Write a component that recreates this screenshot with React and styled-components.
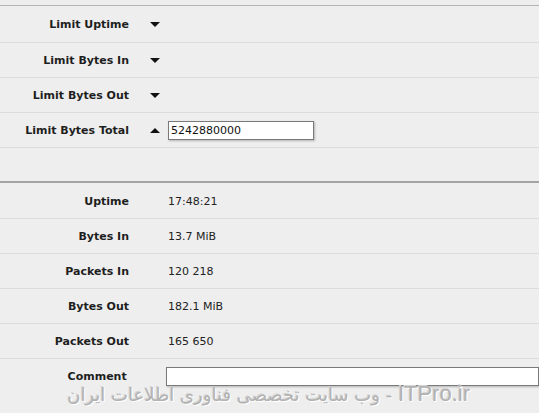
import React from 'react';
import styled, { createGlobalStyle } from 'styled-components';

const Global = createGlobalStyle`
  body {
    margin: 0;
    background: #eeeeee;
    font-family: "DejaVu Sans", Verdana, sans-serif;
    font-size: 11px;
    color: #222;
  }
`;

const Page = styled.div`
  position: relative;
  width: 539px;
  height: 413px;
  overflow: hidden;
  background: #eeeeee;
  padding-top: 5px;
  box-sizing: border-box;
`;

const Section = styled.div`
  border-top: ${props => props.heavy ? '2px solid #a4a4a4' : '1px solid #b4b4b4'};
  padding-top: ${props => props.heavy ? '1px' : '0'};
`;

const Row = styled.div`
  display: flex;
  align-items: center;
  box-sizing: border-box;
  height: ${props => props.h || 35}px;
  border-bottom: ${props => props.last ? 'none' : '1px solid #dcdcdc'};
`;

const Label = styled.div`
  width: 129px;
  text-align: right;
  font-weight: bold;
  color: #1e1e1e;
`;

const Toggle = styled.div`
  width: 0;
  height: 0;
  margin-left: 21px;
  border-left: 5px solid transparent;
  border-right: 5px solid transparent;
  ${props => props.up
    ? 'border-bottom: 5px solid #111;'
    : 'border-top: 5px solid #111;'}
`;

const Value = styled.div`
  margin-left: 39px;
  color: #222;
`;

const Input = styled.input`
  margin-left: ${props => props.ml || 39}px;
  width: ${props => props.w || 146}px;
  height: 19px;
  box-sizing: border-box;
  border: 1px solid #7a7a7a;
  background: #fff;
  font-family: "DejaVu Sans", Verdana, sans-serif;
  font-size: 11px;
  color: #111;
  padding: 0 2px;
  box-shadow: 1px 1px 2px rgba(0,0,0,0.25);
  outline: none;
`;

const Watermark = styled.div`
  position: absolute;
  right: 69px;
  top: 381px;
  direction: rtl;
  white-space: nowrap;
  color: #b2b2b2;
  text-shadow: 1px 1px 0 #ffffff, -1px -1px 0 #d4d4d4;
`;

const MarkLatin = styled.span`
  font-family: "Liberation Sans", Arial, sans-serif;
  font-size: 22px;
`;

const MarkArabic = styled.span`
  font-family: "DejaVu Sans", sans-serif;
  font-size: 18px;
`;

const limits = [
  { label: 'Limit Uptime', h: 37 },
  { label: 'Limit Bytes In' },
  { label: 'Limit Bytes Out' },
  { label: 'Limit Bytes Total', open: true, value: '5242880000' },
];

const stats = [
  ['Uptime', '17:48:21'],
  ['Bytes In', '13.7 MiB'],
  ['Packets In', '120 218'],
  ['Bytes Out', '182.1 MiB'],
  ['Packets Out', '165 650'],
];

export default function App() {
  return (
    <Page>
      <Global />
      <Section>
        {limits.map(l => (
          <Row key={l.label} h={l.h}>
            <Label>{l.label}</Label>
            <Toggle up={l.open} />
            {l.open && <Input ml={8} defaultValue={l.value} />}
          </Row>
        ))}
        <Row h={33} last />
      </Section>
      <Section heavy>
        {stats.map(([k, v]) => (
          <Row key={k}>
            <Label>{k}</Label>
            <Value>{v}</Value>
          </Row>
        ))}
        <Row last>
          <Label>Comment</Label>
          <Input w={380} />
        </Row>
      </Section>
      <Watermark>
        <MarkLatin>ITPro.ir</MarkLatin>
        <MarkArabic> - وب سایت تخصصی فناوری اطلاعات ایران</MarkArabic>
      </Watermark>
    </Page>
  );
}
